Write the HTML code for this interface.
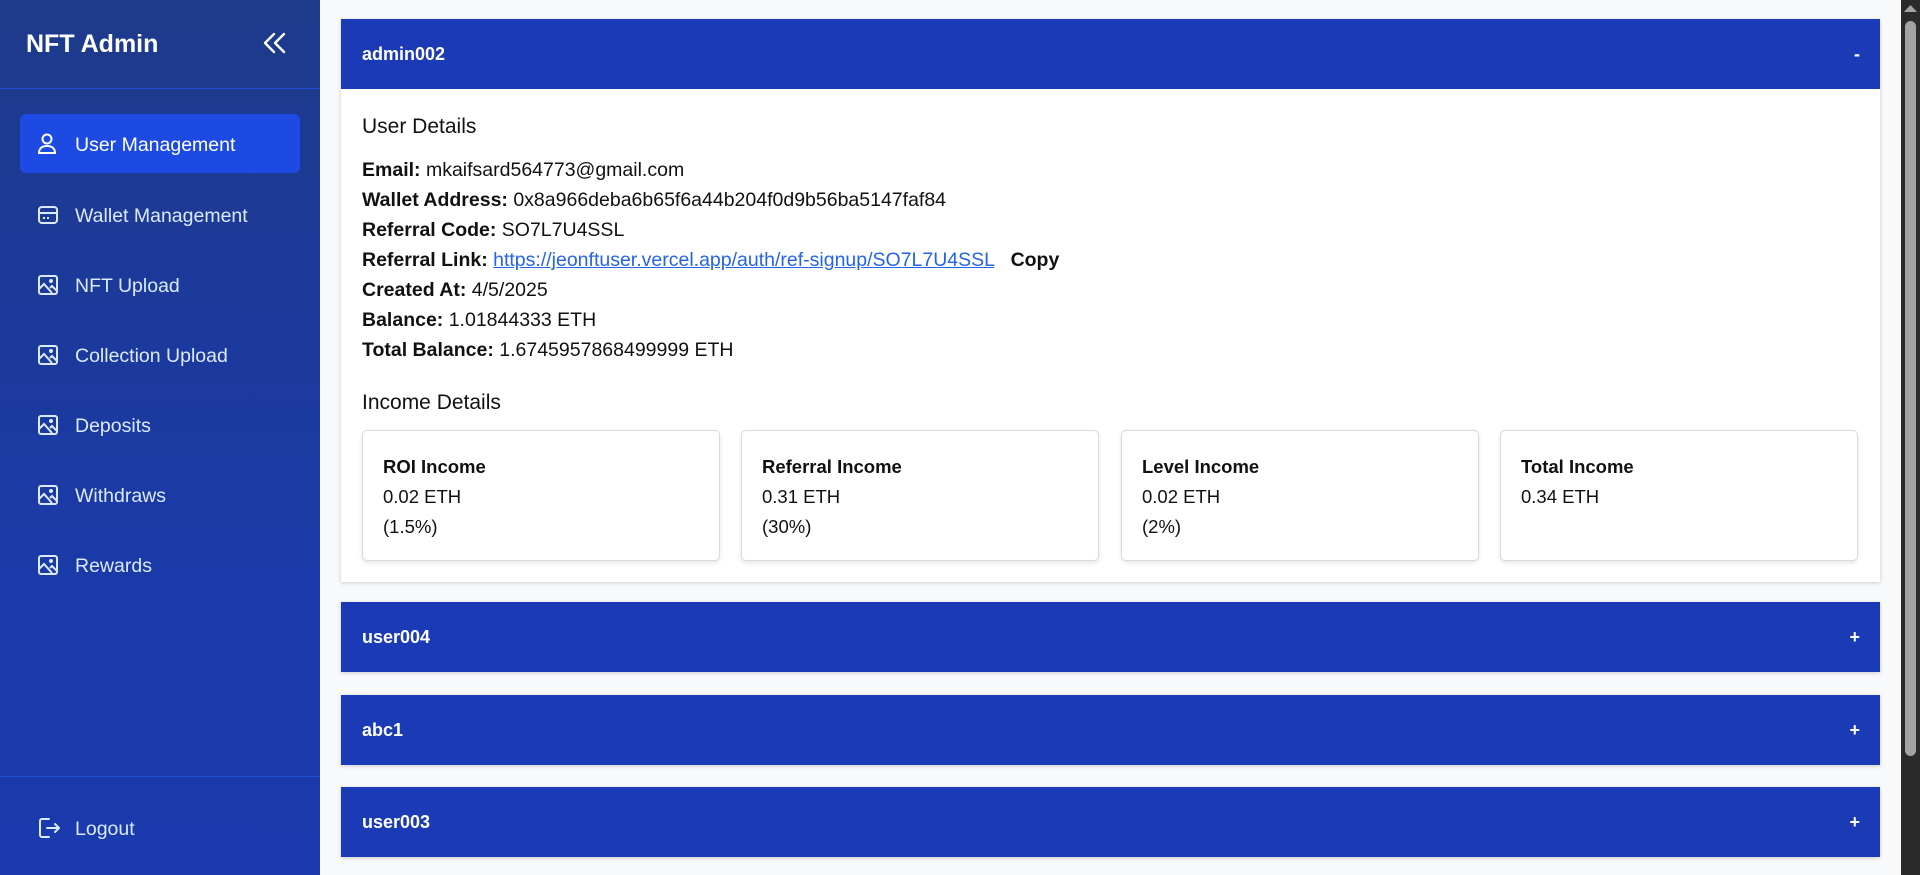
<!DOCTYPE html>
<html><head><meta charset="utf-8"><style>
*{box-sizing:border-box;margin:0;padding:0}
body{width:1920px;height:875px;overflow:hidden;font-family:"Liberation Sans",sans-serif;background:#f8f9fb;position:relative}
.sb{position:absolute;left:0;top:0;width:320px;height:875px;background:linear-gradient(180deg,#1e3a8a 0%,#1a3aab 70%,#1a3aad 100%)}
.sb h1{position:absolute;left:26px;top:30px;color:#fff;font-size:25px;font-weight:bold}
.chev{position:absolute;left:262px;top:32px}
.line{position:absolute;left:0;width:320px;height:1px;background:#1d4ed8}
.nav{position:absolute;left:20px;width:280px;height:59px;border-radius:6px;color:#dbeafe;font-size:19.5px;display:flex;align-items:center;padding-left:55px;padding-top:4px}
.nav.act{background:#1d4ae3;color:#fff}
.nav svg{position:absolute;left:17px;top:19px}
.main{position:absolute;left:341px;width:1539px;background:#fff;box-shadow:0 1px 4px rgba(0,0,0,.18)}
.hd{height:70px;background:#1a3bb5;color:#fff;font-size:18px;font-weight:bold;display:flex;align-items:center;justify-content:space-between;padding:0 20px 0 21px}
.body{padding:0 21px;height:493px;position:relative}
.h2{position:absolute;left:21px;font-size:21px;color:#111}
.row{position:absolute;left:21px;font-size:19.5px;color:#111}
.row b{font-weight:bold}
.row a{color:#2563eb;text-decoration:underline}
.box{position:absolute;top:341px;width:358px;height:131px;border:1px solid #d6d9e0;border-radius:5px;box-shadow:0 2px 4px rgba(0,0,0,.1);padding:21px 20px;font-size:18.5px;color:#111;line-height:30px}
.box b{display:block;font-weight:bold}
.sc{position:absolute;left:1901px;top:0;width:19px;height:875px;background:#2b2b2b}
.sc .th{position:absolute;left:4px;top:21px;width:11px;height:735px;background:#a3a3a3;border-radius:6px}
</style></head><body>
<div class="sb">
<h1>NFT Admin</h1>
<svg class="chev" width="26" height="22" viewBox="0 0 26 22" fill="none" stroke="#fff" stroke-width="2.4" stroke-linecap="round" stroke-linejoin="round"><path d="M12 2 3 11l9 9M22 2l-9 9 9 9"/></svg>
<div class="line" style="top:88px"></div>
<div class="nav act" style="top:114px"><svg width="20" height="22" viewBox="0 0 20 22" fill="none" stroke="#fff" stroke-width="2"><circle cx="10" cy="6" r="4.5"/><path d="M2 20c0-5 3.5-7 8-7s8 2 8 7z"/></svg>User Management</div>
<div class="nav" style="top:185px"><svg width="22" height="22" viewBox="0 0 22 22" fill="none" stroke="#dbeafe" stroke-width="2"><rect x="2" y="3" width="18" height="16" rx="3"/><path d="M2 9h18M6 14h2M10 14h2"/></svg>Wallet Management</div>
<div class="nav" style="top:255px"><svg width="22" height="22" viewBox="0 0 22 22" fill="none" stroke="#dbeafe" stroke-width="2"><rect x="2" y="2" width="18" height="18" rx="2"/><path d="M2 15l5-5 8 9M13 14l2-2 5 5"/><circle cx="14" cy="7" r="1"/></svg>NFT Upload</div>
<div class="nav" style="top:325px"><svg width="22" height="22" viewBox="0 0 22 22" fill="none" stroke="#dbeafe" stroke-width="2"><rect x="2" y="2" width="18" height="18" rx="2"/><path d="M2 15l5-5 8 9M13 14l2-2 5 5"/><circle cx="14" cy="7" r="1"/></svg>Collection Upload</div>
<div class="nav" style="top:395px"><svg width="22" height="22" viewBox="0 0 22 22" fill="none" stroke="#dbeafe" stroke-width="2"><rect x="2" y="2" width="18" height="18" rx="2"/><path d="M2 15l5-5 8 9M13 14l2-2 5 5"/><circle cx="14" cy="7" r="1"/></svg>Deposits</div>
<div class="nav" style="top:465px"><svg width="22" height="22" viewBox="0 0 22 22" fill="none" stroke="#dbeafe" stroke-width="2"><rect x="2" y="2" width="18" height="18" rx="2"/><path d="M2 15l5-5 8 9M13 14l2-2 5 5"/><circle cx="14" cy="7" r="1"/></svg>Withdraws</div>
<div class="nav" style="top:535px"><svg width="22" height="22" viewBox="0 0 22 22" fill="none" stroke="#dbeafe" stroke-width="2"><rect x="2" y="2" width="18" height="18" rx="2"/><path d="M2 15l5-5 8 9M13 14l2-2 5 5"/><circle cx="14" cy="7" r="1"/></svg>Rewards</div>
<div class="line" style="top:776px"></div>
<div class="nav" style="top:798px"><svg width="24" height="22" viewBox="0 0 24 22" fill="none" stroke="#dbeafe" stroke-width="2" stroke-linecap="round" stroke-linejoin="round"><path d="M12 2H5a2 2 0 0 0-2 2v14a2 2 0 0 0 2 2h7M10 11h12M18 7l4 4-4 4"/></svg>Logout</div>
</div>

<div class="main" style="top:19px">
<div class="hd"><span>admin002</span><span>-</span></div>
<div class="body">
<div class="h2" style="top:26px">User Details</div>
<div class="row" style="top:70px"><b>Email:</b> mkaifsard564773@gmail.com</div>
<div class="row" style="top:100px"><b>Wallet Address:</b> 0x8a966deba6b65f6a44b204f0d9b56ba5147faf84</div>
<div class="row" style="top:130px"><b>Referral Code:</b> SO7L7U4SSL</div>
<div class="row" style="top:160px"><b>Referral Link:</b> <a>https://jeonftuser.vercel.app/auth/ref-signup/SO7L7U4SSL</a> &nbsp; <b>Copy</b></div>
<div class="row" style="top:190px"><b>Created At:</b> 4/5/2025</div>
<div class="row" style="top:220px"><b>Balance:</b> 1.01844333 ETH</div>
<div class="row" style="top:250px"><b>Total Balance:</b> 1.6745957868499999 ETH</div>
<div class="h2" style="top:302px">Income Details</div>
<div class="box" style="left:21px"><b>ROI Income</b>0.02 ETH<br>(1.5%)</div>
<div class="box" style="left:400px"><b>Referral Income</b>0.31 ETH<br>(30%)</div>
<div class="box" style="left:780px"><b>Level Income</b>0.02 ETH<br>(2%)</div>
<div class="box" style="left:1159px"><b>Total Income</b>0.34 ETH</div>
</div>
</div>
<div class="main" style="top:602px"><div class="hd"><span>user004</span><span>+</span></div></div>
<div class="main" style="top:695px"><div class="hd"><span>abc1</span><span>+</span></div></div>
<div class="main" style="top:787px"><div class="hd"><span>user003</span><span>+</span></div></div>
<div class="sc"><svg style="position:absolute;left:3px;top:5px" width="13" height="8"><path d="M0 7L6.5 0 13 7z" fill="#a3a3a3"/></svg><div class="th"></div></div>
</body></html>
